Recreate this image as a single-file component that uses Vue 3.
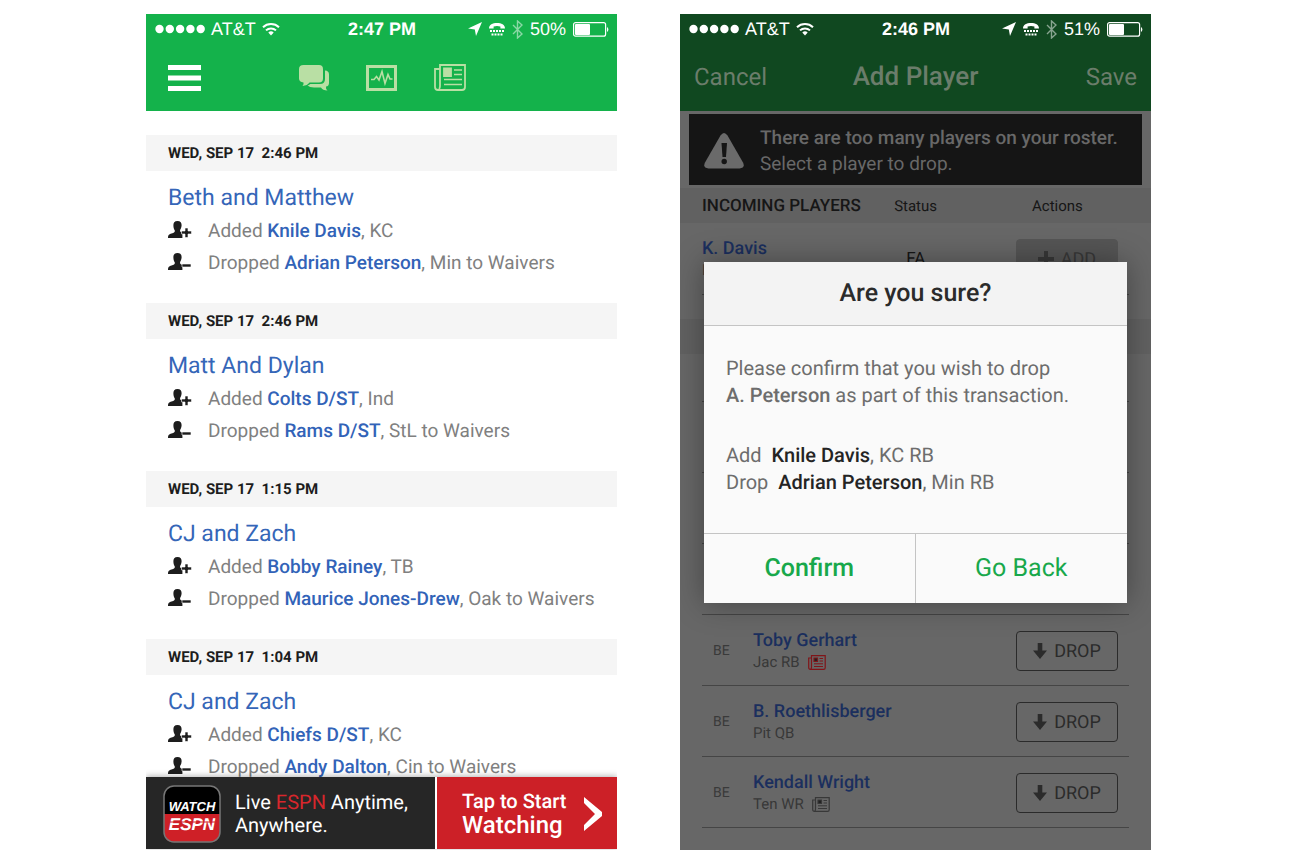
<template>
  <div class="page">
    <section class="phone activity" aria-label="League activity">
      <header class="top-bar">
        <div class="status-bar">
          <span class="carrier">
            <svg width="50" height="10" viewBox="0 0 50 10" fill="currentColor">
              <circle v-for="n in 5" :key="n" :cx="n * 10.3 - 5.8" cy="5" r="4.2" />
            </svg>
            AT&amp;T
            <svg class="wifi" width="18" height="14" viewBox="0 0 18 14" fill="none" stroke="currentColor" stroke-width="2">
              <path d="M1 5.2a11.6 11.6 0 0 1 16 0M4 8.4a7.2 7.2 0 0 1 10 0" />
              <path d="M9 13.6l-2.7-3a4 4 0 0 1 5.4 0z" fill="currentColor" stroke="none" />
            </svg>
          </span>
          <span class="clock">2:47 PM</span>
          <span class="indicators">
            <svg width="14" height="14" viewBox="0 0 14 14" fill="currentColor"><path d="M14 0L8 14 6.8 7.4 0 6.6z" /></svg>
            <svg class="tty" width="16" height="13" viewBox="0 0 16 13" fill="currentColor">
              <path d="M0 5.4C0 1.6 3.6 0 8 0s8 1.6 8 5.4H11.4V3.6a11 11 0 0 0-6.8 0v1.8z" />
              <path d="M1 8h14M2.5 11.6h11" stroke="currentColor" stroke-width="2" stroke-dasharray="2 1" />
            </svg>
            <svg class="bluetooth" width="11" height="19" viewBox="0 0 11 19" fill="none" stroke="currentColor" stroke-width="1.4">
              <path d="M1 5l9 9-4.5 4V1L10 5l-9 9" />
            </svg>
            50%
            <svg class="battery" width="36" height="15" viewBox="0 0 36 15">
              <rect x=".6" y=".6" width="32" height="13.6" rx="2" fill="none" stroke="currentColor" stroke-width="1.2" />
              <rect x="2" y="2" width="15" height="11" rx="1" fill="currentColor" />
              <path d="M34 5a3 3 0 0 1 0 5z" fill="currentColor" />
            </svg>
          </span>
        </div>

        <nav class="tools">
          <button class="icon-button menu" type="button" aria-label="Menu">
            <svg width="33" height="26" viewBox="0 0 33 26" fill="#fff"><path d="M0 0h33v5H0zM0 10.5h33v5H0zM0 21h33v5H0z" /></svg>
          </button>
          <button class="icon-button" type="button" aria-label="Messages">
            <svg width="30" height="27" viewBox="0 0 30 27" fill="currentColor">
              <path d="M4.500 1h15.500q4 0 4 4v9.500q0 4-4 4H10.500q-2 3-7 3.500 1.500-2 1-3.600Q0 18 0 14.500V5q0-4 4.500-4z" />
              <path d="M26 6.500q4 .3 4 4V19q0 3-3 3.600-.5 2 1.500 4-5-.3-6.500-3.100H15q-4.500 0-6.500-2 1.500-.5 2.800-1.500H21q5 0 5-5z" />
            </svg>
          </button>
          <button class="icon-button" type="button" aria-label="Scoreboard">
            <svg width="31" height="26" viewBox="0 0 31 26" fill="none" stroke="currentColor">
              <rect x="1.500" y="1.500" width="28" height="23" stroke-width="3" />
              <path d="M5 14.500h3l2.500-3 2.500 3.500 3-8.500 3 12 3-9 2 4.500h2.500" stroke-width="1.600" />
            </svg>
          </button>
          <button class="icon-button" type="button" aria-label="News">
            <svg width="32" height="27" viewBox="0 0 32 27" fill="none" stroke="currentColor" stroke-width="1.800">
              <path d="M6 22V1h25v22q0 3-3 3H4q-3 0-3-3V5h5M6 22q0 2-1 3" />
              <path d="M20 6h8M20 10.500h8M10 15.500h18M10 20.500h18" stroke-width="1.600" />
              <path d="M10 4.500h7v7.500h-7z" fill="currentColor" />
            </svg>
          </button>
        </nav>
      </header>

      <main class="feed">
        <article v-for="entry in activity" :key="entry.id" class="entry">
          <h2 class="entry-date">{{ entry.date }}&nbsp; {{ entry.time }}</h2>
          <div class="entry-body">
            <h3 class="entry-team">{{ entry.team }}</h3>
            <p v-for="move in entry.moves" :key="move.player" class="move">
              <svg class="move-icon" width="24" height="20" viewBox="0 0 24 20" fill="currentColor">
                <path d="M9.500 0c3 0 4.300 1.800 4.100 4.600-.2 2.400-1 3.400-1.500 4.500-.2 1.600.3 2 2.300 2.700V17H0c0-3 .8-3.800 3.500-4.600 2.700-.8 3.600-1.300 3.300-3C6 8.400 5.500 7 5.400 4.800 5.200 1.800 6.500 0 9.500 0z" />
                <path v-if="move.type === 'Added'" d="M17 7h3v3h3.500v3H20v3.500h-3V13h-3.500v-3H17z" stroke="#fff" stroke-width=".6" />
                <path v-else d="M14 11h9v3h-9z" stroke="#fff" stroke-width=".6" />
              </svg>
              <span>{{ move.type }} <a href="#">{{ move.player }}</a>, {{ move.detail }}</span>
            </p>
          </div>
        </article>
      </main>

      <aside class="promo">
        <div class="promo-copy">
          <svg class="promo-logo" width="58" height="58" viewBox="0 0 58 58" role="img" aria-label="Watch ESPN">
            <rect x="1" y="1" width="56" height="56" rx="10" fill="#000" />
            <path d="M1 29h56v18q0 10-10 10H11Q1 57 1 47z" fill="#cf2027" />
            <rect x="1" y="1" width="56" height="56" rx="10" fill="none" stroke="#777" stroke-width="1.500" />
            <text x="29" y="26" class="logo-watch">WATCH</text>
            <text x="29" y="45" class="logo-espn">ESPN</text>
            <path d="M6 37h46" stroke="#cf2027" stroke-width="1" />
          </svg>
          <p>Live <em>ESPN</em> Anytime,<br />Anywhere.</p>
        </div>
        <button class="promo-action" type="button">
          <span>Tap to Start<strong>Watching</strong></span>
          <svg width="18" height="34" viewBox="0 0 18 34" fill="currentColor"><path d="M0 0l18 15v4L0 34v-6l11-11L0 6z" /></svg>
        </button>
      </aside>
    </section>

    <section class="phone roster" aria-label="Add player">
      <header class="top-bar">
        <div class="status-bar">
          <span class="carrier">
            <svg width="50" height="10" viewBox="0 0 50 10" fill="currentColor">
              <circle v-for="n in 5" :key="n" :cx="n * 10.3 - 5.8" cy="5" r="4.2" />
            </svg>
            AT&amp;T
            <svg class="wifi" width="18" height="14" viewBox="0 0 18 14" fill="none" stroke="currentColor" stroke-width="2">
              <path d="M1 5.2a11.6 11.6 0 0 1 16 0M4 8.4a7.2 7.2 0 0 1 10 0" />
              <path d="M9 13.6l-2.7-3a4 4 0 0 1 5.4 0z" fill="currentColor" stroke="none" />
            </svg>
          </span>
          <span class="clock">2:46 PM</span>
          <span class="indicators">
            <svg width="14" height="14" viewBox="0 0 14 14" fill="currentColor"><path d="M14 0L8 14 6.8 7.4 0 6.6z" /></svg>
            <svg class="tty" width="16" height="13" viewBox="0 0 16 13" fill="currentColor">
              <path d="M0 5.4C0 1.6 3.6 0 8 0s8 1.6 8 5.4H11.4V3.6a11 11 0 0 0-6.8 0v1.8z" />
              <path d="M1 8h14M2.5 11.6h11" stroke="currentColor" stroke-width="2" stroke-dasharray="2 1" />
            </svg>
            <svg class="bluetooth" width="11" height="19" viewBox="0 0 11 19" fill="none" stroke="currentColor" stroke-width="1.4">
              <path d="M1 5l9 9-4.5 4V1L10 5l-9 9" />
            </svg>
            51%
            <svg class="battery" width="36" height="15" viewBox="0 0 36 15">
              <rect x=".6" y=".6" width="32" height="13.6" rx="2" fill="none" stroke="currentColor" stroke-width="1.2" />
              <rect x="2" y="2" width="15" height="11" rx="1" fill="currentColor" />
              <path d="M34 5a3 3 0 0 1 0 5z" fill="currentColor" />
            </svg>
          </span>
        </div>

        <div class="title-bar">
          <button type="button">Cancel</button>
          <h1>Add Player</h1>
          <button type="button">Save</button>
        </div>
      </header>

      <main class="screen">
        <div class="alert" role="alert">
          <svg width="40" height="36" viewBox="0 0 40 36">
            <path d="M16.500 2.500q3.500-5 7 0l15.500 27q2.500 5.500-3.500 6h-31q-6-.5-3.500-6z" fill="#6a6a6a" />
            <path d="M17.500 10h5.500l-1 14h-3.500z" fill="#151515" />
            <circle cx="20.200" cy="28.500" r="2.700" fill="#151515" />
          </svg>
          <p><strong>There are too many players on your roster.</strong><br />Select a player to drop.</p>
        </div>

        <table class="players incoming">
          <thead>
            <tr>
              <th class="lead">INCOMING PLAYERS</th>
              <th>Status</th>
              <th class="action">Actions</th>
            </tr>
          </thead>
          <tbody>
            <tr>
              <td><a href="#">K. Davis</a><small>KC RB</small></td>
              <td class="status">FA</td>
              <td class="action">
                <button class="add" type="button">
                  <svg width="16" height="16" viewBox="0 0 16 16" fill="currentColor"><path d="M6 0h4v6h6v4h-6v6H6v-6H0V6h6z" /></svg>
                  ADD
                </button>
              </td>
            </tr>
          </tbody>
        </table>

        <table class="players current">
          <thead>
            <tr><th class="slot"></th><th></th><th class="action"></th></tr>
          </thead>
          <tbody>
            <tr class="short"><td colspan="3"></td></tr>
            <tr v-for="n in 3" :key="n"><td colspan="3"></td></tr>
            <tr v-for="player in bench" :key="player.name">
              <td class="slot">BE</td>
              <td>
                <a href="#">{{ player.name }}</a>
                <small>
                  {{ player.position }}
                  <svg v-if="player.news" :class="['news', player.news]" width="18" height="15" viewBox="0 0 18 15" fill="none" stroke="currentColor" stroke-width="1.200">
                    <path d="M3.500 12V.7h13.700v12q0 1.600-1.600 1.600H2.400Q.7 14.300.7 12.500V3h2.800M3.500 12q0 1.400-.7 2" />
                    <path d="M11.500 3.500H15M11.500 6H15M6 8.800h9M6 11.500h9" stroke-width="1" />
                    <path class="photo" d="M6 3h3.500v3.500H6z" />
                  </svg>
                </small>
              </td>
              <td class="action">
                <button type="button">
                  <svg width="14" height="16" viewBox="0 0 14 16" fill="currentColor"><path d="M4.700 0h4.600v7.500H14L7 16 0 7.500h4.700z" /></svg>
                  DROP
                </button>
              </td>
            </tr>
          </tbody>
        </table>
      </main>

      <div class="backdrop">
        <div class="dialog" role="dialog" aria-modal="true" aria-labelledby="dialog-title">
          <h2 id="dialog-title">Are you sure?</h2>
          <div class="dialog-body">
            <p>Please confirm that you wish to drop<br /><b>A. Peterson</b> as part of this transaction.</p>
            <p class="summary">Add&nbsp; <strong>Knile Davis</strong>, KC RB<br />Drop&nbsp; <strong>Adrian Peterson</strong>, Min RB</p>
          </div>
          <footer>
            <button class="primary" type="button">Confirm</button>
            <button type="button">Go Back</button>
          </footer>
        </div>
      </div>
    </section>
  </div>
</template>

<script setup>
const activity = [
  {
    id: 1,
    date: 'WED, SEP 17',
    time: '2:46 PM',
    team: 'Beth and Matthew',
    moves: [
      { type: 'Added', player: 'Knile Davis', detail: 'KC' },
      { type: 'Dropped', player: 'Adrian Peterson', detail: 'Min to Waivers' }
    ]
  },
  {
    id: 2,
    date: 'WED, SEP 17',
    time: '2:46 PM',
    team: 'Matt And Dylan',
    moves: [
      { type: 'Added', player: 'Colts D/ST', detail: 'Ind' },
      { type: 'Dropped', player: 'Rams D/ST', detail: 'StL to Waivers' }
    ]
  },
  {
    id: 3,
    date: 'WED, SEP 17',
    time: '1:15 PM',
    team: 'CJ and Zach',
    moves: [
      { type: 'Added', player: 'Bobby Rainey', detail: 'TB' },
      { type: 'Dropped', player: 'Maurice Jones-Drew', detail: 'Oak to Waivers' }
    ]
  },
  {
    id: 4,
    date: 'WED, SEP 17',
    time: '1:04 PM',
    team: 'CJ and Zach',
    moves: [
      { type: 'Added', player: 'Chiefs D/ST', detail: 'KC' },
      { type: 'Dropped', player: 'Andy Dalton', detail: 'Cin to Waivers' }
    ]
  }
]

const bench = [
  { name: 'Toby Gerhart', position: 'Jac RB', news: 'breaking' },
  { name: 'B. Roethlisberger', position: 'Pit QB', news: '' },
  { name: 'Kendall Wright', position: 'Ten WR', news: 'recent' }
]
</script>

<style>
body {
  margin: 0;
  background: #fff;
}
</style>

<style scoped>
.page {
  box-sizing: border-box;
  height: 100vh;
  padding: 14px 145px 14px 146px;
  display: grid;
  grid-template-columns: 1fr 1fr;
  gap: 63px;
  font-family: Roboto, 'Liberation Sans', sans-serif;
  text-rendering: geometricPrecision;
}

h1,
h2,
h3,
p {
  margin: 0;
  font-weight: 400;
}

button {
  margin: 0;
  padding: 0;
  border: none;
  background: transparent;
  font-family: inherit;
  text-rendering: inherit;
  color: inherit;
  cursor: pointer;
}

a {
  text-decoration: none;
}

svg {
  flex: none;
}

.phone {
  position: relative;
  display: flex;
  flex-direction: column;
  min-height: 0;
  overflow: hidden;
}

.top-bar {
  flex: none;
  background: #14b24b;
}

.status-bar {
  display: grid;
  grid-template-columns: 1fr auto 1fr;
  align-items: center;
  height: 30px;
  padding: 0 8px 0 9px;
  font-family: 'Liberation Sans', sans-serif;
  font-size: 18px;
  color: #fff;
}

.carrier,
.indicators {
  display: flex;
  align-items: center;
  gap: 6px;
}

.indicators {
  justify-content: flex-end;
  gap: 7px;
}

.clock {
  font-weight: 700;
}

.bluetooth {
  opacity: 0.5;
}

/* activity feed */
.tools {
  display: flex;
  align-items: center;
  height: 67px;
  padding: 0 22px;
  gap: 37px;
  box-sizing: border-box;
  color: #b9dfa4;
}

.icon-button {
  display: flex;
}

.menu {
  margin-right: 61px;
}

.feed {
  flex: 1;
  min-height: 0;
  overflow: hidden;
  padding-top: 24px;
}

.entry-date {
  padding-left: 22px;
  line-height: 36px;
  font-size: 15px;
  font-weight: 700;
  color: #1d1d1d;
  background: #f5f5f5;
}

.entry-body {
  padding: 12px 22px 24px;
}

.entry-team {
  margin-bottom: 2px;
  line-height: 30px;
  font-size: 23px;
  color: #3566b8;
}

.move {
  display: flex;
  align-items: center;
  gap: 16px;
  line-height: 32px;
  font-size: 19px;
  color: #808080;
}

.move-icon {
  color: #1d1d1d;
}

.move a {
  font-weight: 500;
  color: #3263b8;
}

.promo {
  position: relative;
  flex: none;
  display: grid;
  grid-template-columns: 289fr 180fr;
  gap: 2px;
  height: 72px;
  margin-bottom: 1px;
  box-shadow: 0 -1px 6px rgba(0, 0, 0, 0.3);
  background: #fff;
  color: #fff;
}

.promo-copy {
  display: flex;
  align-items: center;
  gap: 14px;
  padding: 2px 0 0 17px;
  background: #262626;
  font-size: 20px;
  line-height: 23px;
}

.promo-copy em {
  font-style: normal;
  color: #d8262c;
}

.logo-watch,
.logo-espn {
  font-family: 'Liberation Sans', sans-serif;
  font-size: 13px;
  font-weight: 700;
  font-style: italic;
  text-anchor: middle;
  fill: #fff;
}

.logo-espn {
  font-size: 17px;
}

.promo-action {
  display: flex;
  align-items: center;
  justify-content: space-between;
  padding: 2px 15px 0 25px;
  background: #cc2027;
  font-size: 20px;
  font-weight: 500;
  line-height: 23px;
  text-align: left;
  color: #fff;
}

.promo-action strong {
  display: block;
  line-height: 25px;
  font-size: 24px;
  font-weight: 500;
}

/* add player */
.roster {
  background: #676767;
}

.roster .top-bar {
  background: #104820;
}

.title-bar {
  display: grid;
  grid-template-columns: 1fr auto 1fr;
  align-items: center;
  height: 67px;
  padding: 0 14px 2px;
  box-sizing: border-box;
  color: #6b7d6b;
}

.title-bar h1 {
  font-size: 26px;
  font-weight: 500;
}

.title-bar button {
  font-size: 24px;
  text-align: left;
}

.title-bar button:last-child {
  text-align: right;
}

.alert {
  display: flex;
  align-items: center;
  gap: 16px;
  height: 71px;
  box-sizing: border-box;
  margin: 3px 9px;
  padding: 2px 0 0 15px;
  background: #151515;
  font-size: 19px;
  line-height: 26px;
  color: #686868;
}

.alert strong {
  font-weight: 500;
}

.players {
  width: calc(100% - 44px);
  margin: 0 22px;
  border-collapse: collapse;
  table-layout: fixed;
}

.current {
  margin-top: 24px;
}

.players th,
.players td {
  padding: 0;
  text-align: left;
}

.players tbody td {
  padding-top: 2px;
}

.players thead tr {
  height: 35px;
  background: #616161;
  box-shadow: -22px 0 #616161, 22px 0 #616161;
}

.players th {
  width: auto;
  font-size: 15px;
  font-weight: 400;
  color: #161616;
}

.players .lead {
  width: 45%;
  font-size: 17px;
  font-weight: 500;
}

.players .action {
  width: 113px;
}

.players th.action {
  box-sizing: border-box;
  padding-left: 16px;
}

.players tbody tr {
  height: 71px;
  border-bottom: 1px solid #454545;
}

.players tbody .short {
  height: 48px;
}

.players .slot {
  width: 51px;
  box-sizing: border-box;
  padding-left: 11px;
  font-size: 14px;
  color: #3a3a3a;
}

.players .status {
  padding-left: 12px;
  font-size: 17px;
  color: #161616;
}

.players td a {
  display: block;
  line-height: 22px;
  font-size: 18px;
  font-weight: 500;
  color: #1b2f5e;
}

.players small {
  display: flex;
  align-items: center;
  gap: 8px;
  line-height: 21px;
  font-size: 15px;
  color: #383838;
}

.news.breaking {
  color: #801519;
}

.news .photo {
  fill: #222;
}

.players button {
  display: flex;
  align-items: center;
  justify-content: center;
  gap: 7px;
  width: 102px;
  height: 40px;
  border: 1px solid #2b2b2b;
  border-radius: 4px;
  font-size: 18px;
  color: #2b2b2b;
}

.players .add {
  border-color: #555;
  background: #555;
  color: #383838;
}

.backdrop {
  position: absolute;
  inset: 0;
  display: flex;
  align-items: center;
  padding: 0 24px;
}

.dialog {
  width: 100%;
  background: #fafafa;
  box-shadow: 0 0 28px rgba(0, 0, 0, 0.35);
  color: #6d6d6d;
}

.dialog h2 {
  border-bottom: 1px solid #c4c4c4;
  background: #f3f3f3;
  line-height: 63px;
  font-size: 25px;
  font-weight: 500;
  text-align: center;
  color: #2b2b2b;
}

.dialog-body {
  padding: 29px 22px 37px;
  font-size: 20px;
  line-height: 27px;
}

.dialog-body b {
  font-weight: 500;
}

.summary {
  margin-top: 33px;
}

.summary strong {
  font-weight: 500;
  color: #242424;
}

.dialog footer {
  display: grid;
  grid-template-columns: 1fr 1fr;
  border-top: 1px solid #c4c4c4;
}

.dialog footer button {
  height: 69px;
  font-size: 25px;
  color: #18a84b;
}

.dialog footer .primary {
  border-right: 1px solid #c4c4c4;
  font-weight: 500;
}
</style>
